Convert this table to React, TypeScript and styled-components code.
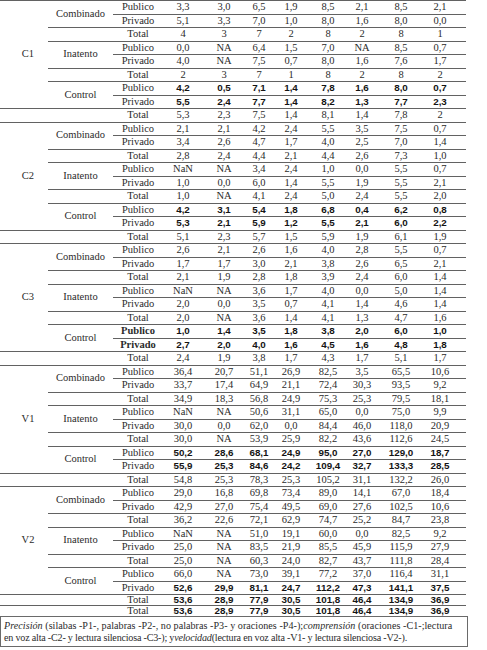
import React from "react";
import styled, { createGlobalStyle } from "styled-components";

const GlobalStyle = createGlobalStyle`
  body {
    margin: 0;
    background: #fff;
  }
`;

interface IRow {
  vals: string[];
  bold?: boolean;
  subBold?: boolean;
}
interface IGroup {
  name: string;
  pub: IRow;
  priv: IRow;
  total: IRow;
}
interface IBlock {
  label: string;
  groups: IGroup[];
  extra?: IRow[];
}

const r = (s: string, bold = false, subBold = false): IRow => ({
  vals: s.split(" "),
  bold,
  subBold,
});

const blocks: IBlock[] = [
  {
    label: "C1",
    groups: [
      { name: "Combinado", pub: r("3,3 3,0 6,5 1,9 8,5 2,1 8,5 2,1"), priv: r("5,1 3,3 7,0 1,0 8,0 1,6 8,0 0,0"), total: r("4 3 7 2 8 2 8 1") },
      { name: "Inatento", pub: r("0,0 NA 6,4 1,5 7,0 NA 8,5 0,7"), priv: r("4,0 NA 7,5 0,7 8,0 1,6 7,6 1,7"), total: r("2 3 7 1 8 2 8 2") },
      { name: "Control", pub: r("4,2 0,5 7,1 1,4 7,8 1,6 8,0 0,7", true), priv: r("5,5 2,4 7,7 1,4 8,2 1,3 7,7 2,3", true), total: r("5,3 2,3 7,5 1,4 8,1 1,4 7,8 2") },
    ],
  },
  {
    label: "C2",
    groups: [
      { name: "Combinado", pub: r("2,1 2,1 4,2 2,4 5,5 3,5 7,5 0,7"), priv: r("3,4 2,6 4,7 1,7 4,0 2,5 7,0 1,4"), total: r("2,8 2,4 4,4 2,1 4,4 2,6 7,3 1,0") },
      { name: "Inatento", pub: r("NaN NA 3,4 2,4 1,0 0,0 5,5 0,7"), priv: r("1,0 0,0 6,0 1,4 5,5 1,9 5,5 2,1"), total: r("1,0 NA 4,1 2,4 5,0 2,4 5,5 2,0") },
      { name: "Control", pub: r("4,2 3,1 5,4 1,8 6,8 0,4 6,2 0,8", true), priv: r("5,3 2,1 5,9 1,2 5,5 2,1 6,0 2,2", true), total: r("5,1 2,3 5,7 1,5 5,9 1,9 6,1 1,9") },
    ],
  },
  {
    label: "C3",
    groups: [
      { name: "Combinado", pub: r("2,6 2,1 2,6 1,6 4,0 2,8 5,5 0,7"), priv: r("1,7 1,7 3,0 2,1 3,8 2,6 6,5 2,1"), total: r("2,1 1,9 2,8 1,8 3,9 2,4 6,0 1,4") },
      { name: "Inatento", pub: r("NaN NA 3,6 1,7 4,0 0,0 5,0 1,4"), priv: r("2,0 0,0 3,5 0,7 4,1 1,4 4,6 1,4"), total: r("2,0 NA 3,6 1,4 4,1 1,3 4,7 1,6") },
      { name: "Control", pub: r("1,0 1,4 3,5 1,8 3,8 2,0 6,0 1,0", true, true), priv: r("2,7 2,0 4,0 1,6 4,5 1,6 4,8 1,8", true, true), total: r("2,4 1,9 3,8 1,7 4,3 1,7 5,1 1,7") },
    ],
  },
  {
    label: "V1",
    groups: [
      { name: "Combinado", pub: r("36,4 20,7 51,1 26,9 82,5 3,5 65,5 10,6"), priv: r("33,7 17,4 64,9 21,1 72,4 30,3 93,5 9,2"), total: r("34,9 18,3 56,8 24,9 75,3 25,3 79,5 18,1") },
      { name: "Inatento", pub: r("NaN NA 50,6 31,1 65,0 0,0 75,0 9,9"), priv: r("30,0 0,0 62,0 0,0 84,4 46,0 118,0 20,9"), total: r("30,0 NA 53,9 25,9 82,2 43,6 112,6 24,5") },
      { name: "Control", pub: r("50,2 28,6 68,1 24,9 95,0 27,0 129,0 18,7", true), priv: r("55,9 25,3 84,6 24,2 109,4 32,7 133,3 28,5", true), total: r("54,8 25,3 78,3 25,3 105,2 31,1 132,2 26,0") },
    ],
  },
  {
    label: "V2",
    groups: [
      { name: "Combinado", pub: r("29,0 16,8 69,8 73,4 89,0 14,1 67,0 18,4"), priv: r("42,9 27,0 75,4 49,5 69,0 27,6 102,5 10,6"), total: r("36,2 22,6 72,1 62,9 74,7 25,2 84,7 23,8") },
      { name: "Inatento", pub: r("NaN NA 51,0 19,1 60,0 0,0 82,5 9,2"), priv: r("25,0 NA 83,5 21,9 85,5 45,9 115,9 27,9"), total: r("25,0 NA 60,3 24,0 82,7 43,7 111,8 28,4") },
      { name: "Control", pub: r("66,0 NA 73,0 39,1 77,2 37,0 116,4 31,1"), priv: r("52,6 29,9 81,1 24,7 112,2 47,3 141,1 37,5", true), total: r("53,6 28,9 77,9 30,5 101,8 46,4 134,9 36,9", true) },
    ],
    extra: [r("53,6 28,9 77,9 30,5 101,8 46,4 134,9 36,9", true)],
  },
];

const Page = styled.div`
  width: 487px;
  font-family: "Liberation Serif", "DejaVu Serif", serif;
  color: #2b2b2b;
`;

const Grid = styled.div`
  display: grid;
  width: 466px;
  grid-template-columns: 48px 65px 50px 40px 42px 28px 36px 38px 30px 48px 41px;
  grid-template-rows: repeat(44, 13.5px) 11px 11px;
`;

const Cell = styled.div`
  box-sizing: border-box;
  border-top: 1px solid #626262;
  display: flex;
  align-items: center;
  justify-content: center;
  white-space: nowrap;
  font-size: 10.5px;
  line-height: 1;
`;

const Label = styled(Cell)<{ $span: number }>`
  grid-row: span ${(p) => p.$span};
  padding-left: 8px;
`;

const Group = styled(Cell)`
  grid-row: span 2;
`;

const Sub = styled(Cell)<{ $bold?: boolean }>`
  font-weight: ${(p) => (p.$bold ? 700 : 400)};
`;

const Num = styled(Cell)<{ $bold?: boolean; $last?: boolean }>`
  padding-right: ${(p) => (p.$last ? "11px" : "0")};
  ${(p) =>
    p.$bold &&
    `
    font-family: "Liberation Sans", Arial, sans-serif;
    font-weight: 700;
    font-size: 9.8px;
    color: #141414;
  `}
`;

const Caption = styled.div`
  box-sizing: border-box;
  width: 468px;
  height: 31px;
  border: 1px solid #6a6a6a;
  padding: 3px 0 0 3px;
  font-size: 10.1px;
  line-height: 12px;
  color: #2b2b2b;
`;

const CapLine = styled.div<{ $tight?: boolean }>`
  white-space: nowrap;
  letter-spacing: ${(p) => (p.$tight ? "-0.2px" : "0.04px")};
`;

function Cells({ sub, row }: { sub: string; row: IRow }) {
  return (
    <>
      <Sub $bold={row.subBold}>{sub}</Sub>
      {row.vals.map((v, i) => (
        <Num key={i} $bold={row.bold} $last={i === row.vals.length - 1}>
          {v}
        </Num>
      ))}
    </>
  );
}

function Block({ block }: { block: IBlock }) {
  return (
    <>
      <Label $span={8}>{block.label}</Label>
      {block.groups.map((g, i) => {
        const last = i === block.groups.length - 1;
        return (
          <React.Fragment key={g.name}>
            <Group>{g.name}</Group>
            <Cells sub="Publico" row={g.pub} />
            <Cells sub="Privado" row={g.priv} />
            {last && <Cell />}
            <Cell />
            <Cells sub="Total" row={g.total} />
          </React.Fragment>
        );
      })}
      {block.extra?.map((row, i) => (
        <React.Fragment key={i}>
          <Cell />
          <Cell />
          <Cells sub="Total" row={row} />
        </React.Fragment>
      ))}
    </>
  );
}

export default function App() {
  return (
    <Page>
      <GlobalStyle />
      <Grid>
        {blocks.map((b) => (
          <Block key={b.label} block={b} />
        ))}
      </Grid>
      <Caption>
        <CapLine>
          <i>Precisión</i> (silabas -P1-, palabras -P2-, no palabras -P3- y oraciones -P4-);<i>comprensión</i> (oraciones -C1-;lectura
        </CapLine>
        <CapLine $tight>
          en voz alta -C2- y lectura silenciosa -C3-); y<i>velocidad</i>(lectura en voz alta -V1- y lectura silenciosa -V2-).
        </CapLine>
      </Caption>
    </Page>
  );
}
